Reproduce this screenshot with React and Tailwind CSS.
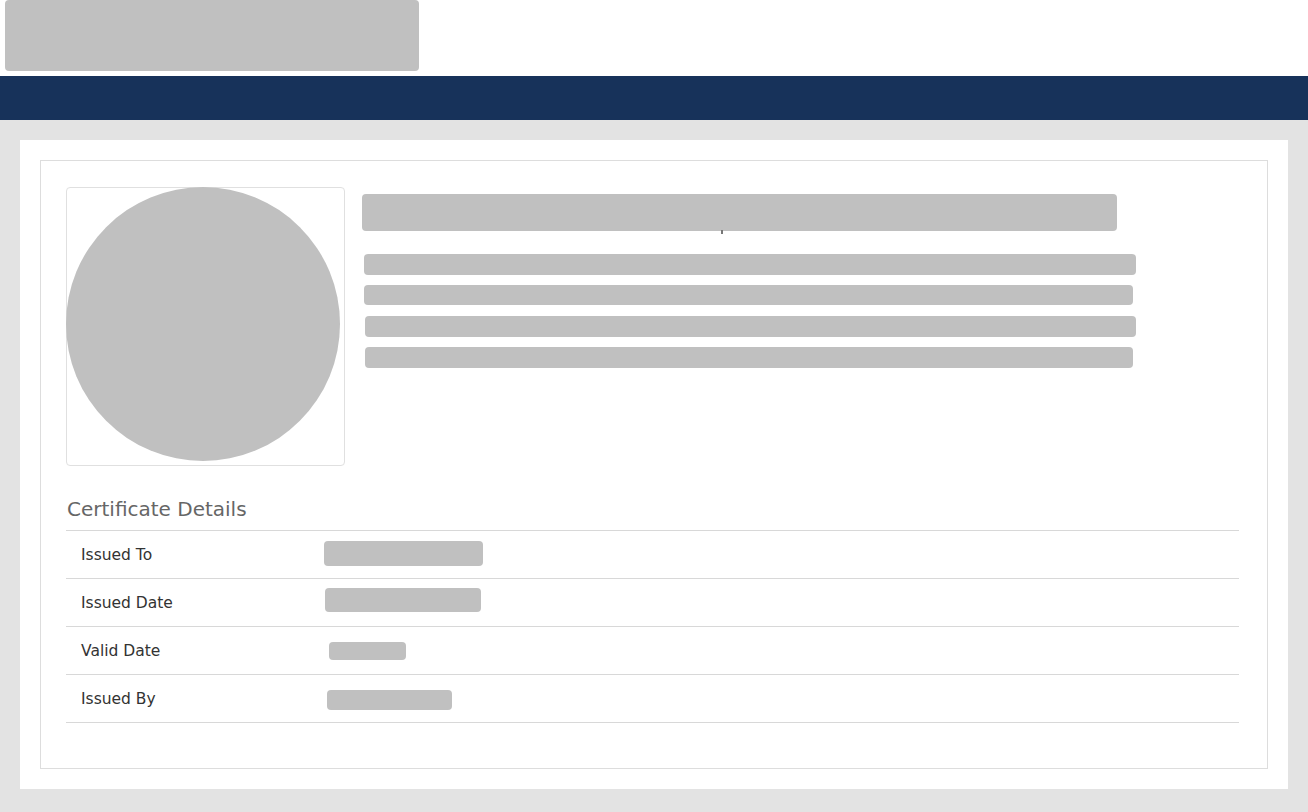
export default function App() {
  const rows = [
    { label: 'Issued To', bar: 'ml-[243px] w-[159px] h-[25px] mt-[-2px]' },
    { label: 'Issued Date', bar: 'ml-[244px] w-[156px] h-[24px] mt-[-6px]' },
    { label: 'Valid Date', bar: 'ml-[248px] w-[77px] h-[18px] mt-[0px]' },
    { label: 'Issued By', bar: 'ml-[246px] w-[125px] h-[20px] mt-[2px]' },
  ]

  return (
    <div className="min-h-[812px] bg-[#e3e3e3] font-['DejaVu_Sans',Verdana,sans-serif]">
      <header className="h-[76px] bg-white pl-[5px]">
        <div className="w-[414px] h-[71px] rounded bg-[#c0c0c0]" />
      </header>
      <nav className="h-[44px] bg-[#17325a]" />

      <main className="p-[20px]">
        <div className="bg-white p-[20px]">
          <div className="border border-[#dddddd] pt-[26px] pb-[45px] pl-[25px] pr-[28px]">
            {/* top section */}
            <div className="flex">
              <div className="w-[279px] h-[279px] shrink-0 border border-[#e0e0e0] rounded">
                <div className="-m-px w-[274px] h-[274px] rounded-full bg-[#c0c0c0]" />
              </div>
              <div className="flex-1 pl-[17px] pt-[7px]">
                <div className="relative w-[755px] h-[37px] rounded bg-[#c0c0c0]">
                  <span className="absolute left-[359px] top-[36px] w-[2px] h-[4px] bg-[#777]" />
                </div>
                <div className="mt-[23px] flex flex-col">
                  <div className="ml-[2px] w-[772px] h-[21px] rounded bg-[#c0c0c0]" />
                  <div className="ml-[2px] mt-[10px] w-[769px] h-[20px] rounded bg-[#c0c0c0]" />
                  <div className="ml-[3px] mt-[11px] w-[771px] h-[21px] rounded bg-[#c0c0c0]" />
                  <div className="ml-[3px] mt-[10px] w-[768px] h-[21px] rounded bg-[#c0c0c0]" />
                </div>
              </div>
            </div>

            {/* details */}
            <h3 className="mt-[30px] pl-[1px] text-[20px] leading-[26px] text-[#666666]">Certificate Details</h3>
            <div className="mt-[8px] border-t border-[#d8d8d8]">
              {rows.map(r => (
                <div key={r.label} className="h-[48px] border-b border-[#d8d8d8] flex items-center pl-[15px]">
                  <span className="w-[0px] pt-[2px] whitespace-nowrap text-[15.5px] text-[#333333]">{r.label}</span>
                  <div className={`rounded bg-[#c0c0c0] ${r.bar}`} />
                </div>
              ))}
            </div>
          </div>
        </div>
      </main>
    </div>
  )
}
